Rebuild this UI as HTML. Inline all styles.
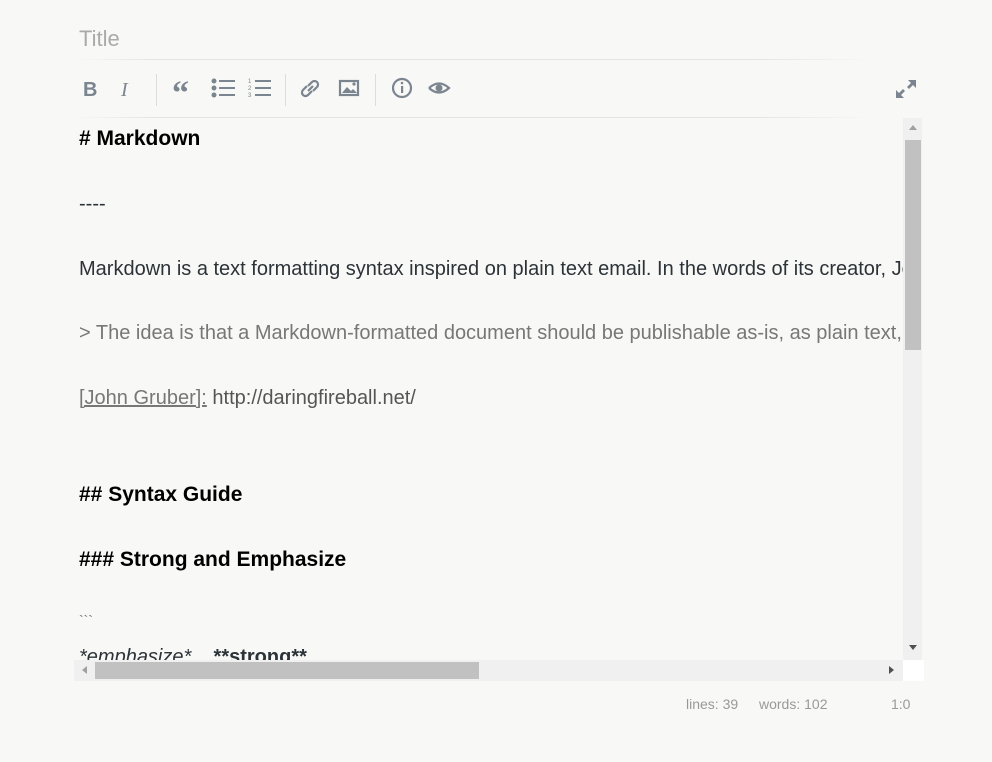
<!DOCTYPE html>
<html><head><style>
body{margin:0;background:#f8f8f6;width:992px;height:762px;overflow:hidden;font-family:"Liberation Sans","DejaVu Sans",sans-serif;position:relative}
.title{position:absolute;left:79px;top:26px;font-size:22px;color:#aaa}
.hl{position:absolute;left:74px;width:800px;height:1px;background:linear-gradient(90deg,#f8f8f6,#e4e4e2 10%,#e4e4e2 85%,#f8f8f6)}
.tb{position:absolute;top:74px;height:30px}
.sep{position:absolute;top:74px;width:1px;height:32px;background:#ddd}
.ed{position:absolute;left:74px;top:118px;width:829px;height:542px;overflow:hidden}
.ln{position:absolute;left:5px;white-space:nowrap;font-size:20px;color:#2c3338;line-height:24px}
.b{font-weight:bold;color:#000;font-size:21px}
.g{color:#777}
.vs{position:absolute;left:903px;top:118px;width:19px;height:542px;background:#f0f0f0}
.hs{position:absolute;left:74px;top:660px;width:829px;height:21px;background:#f0f0f0}
.st{position:absolute;top:696px;font-size:14px;color:#999}
</style></head><body>
<div class="title">Title</div>
<div class="hl" style="top:59px"></div>
<div class="hl" style="top:117px"></div>
<svg class="tb" style="left:74px" width="400" height="30" viewBox="0 0 400 30" fill="#7a8590">
<text x="9" y="22" font-size="20" font-weight="bold" font-family="Liberation Sans">B</text>
<text x="47" y="22" font-size="20" font-style="italic" font-family="Liberation Serif">I</text>
<text x="98" y="30" font-size="34" font-weight="bold" font-family="Liberation Serif">“</text>
<circle cx="140" cy="7" r="2.5"/><circle cx="140" cy="14" r="2.5"/><circle cx="140" cy="21" r="2.5"/>
<rect x="145" y="6" width="16" height="2"/><rect x="145" y="13" width="16" height="2"/><rect x="145" y="20" width="16" height="2"/>
<text x="174" y="9" font-size="6">1</text><text x="174" y="16" font-size="6">2</text><text x="174" y="23" font-size="6">3</text>
<rect x="181" y="6" width="16" height="2"/><rect x="181" y="13" width="16" height="2"/><rect x="181" y="20" width="16" height="2"/>
<g fill="none" stroke="#7a8590" stroke-width="2.2"><path d="M233 12l-4 4a3.5 3.5 0 0 0 5 5l4-4M239 17l4-4a3.5 3.5 0 0 0-5-5l-4 4M234 17l5-5"/>
<rect x="266" y="7" width="18" height="14"/><circle cx="328" cy="14" r="9"/>
<path d="M355 14q10-9 20 0q-10 9-20 0"/></g>
<path d="M268 19l5-6 4 4 2-2 4 4z"/><circle cx="280" cy="10" r="1.6"/>
<rect x="327" y="12" width="2.2" height="7"/><circle cx="328" cy="9" r="1.3"/><circle cx="365" cy="14" r="3.5"/>
</svg>
<div class="sep" style="left:156px"></div><div class="sep" style="left:285px"></div><div class="sep" style="left:375px"></div>
<svg style="position:absolute;left:894px;top:78px" width="24" height="22" fill="#7a8590"><path d="M14 2h8v8l-3-3-4 4-2-2 4-4zM2 12l3 3 4-4 2 2-4 4 3 3H2z"/></svg>
<div class="ed">
<div class="ln b" style="top:9px"># Markdown</div>
<div class="ln" style="top:74px">----</div>
<div class="ln" style="top:139px">Markdown is a text formatting syntax inspired on plain text email. In the words of its creator, John Gruber:</div>
<div class="ln g" style="top:203px">&gt; The idea is that a Markdown-formatted document should be publishable as-is, as plain text, without looking</div>
<div class="ln" style="top:268px"><span class="g" style="text-decoration:underline">[John Gruber]:</span> <span style="color:#555">http://daringfireball.net/</span></div>
<div class="ln b" style="top:365px">## Syntax Guide</div>
<div class="ln b" style="top:430px">### Strong and Emphasize</div>
<div class="ln g" style="top:490px;font-size:14px">&#96;&#96;&#96;</div>
<div class="ln" style="top:527px"><i>*emphasize*</i> &nbsp;&nbsp; <b>**strong**</b></div>
</div>
<div class="vs"><div style="position:absolute;left:2px;top:22px;width:16px;height:210px;background:#c1c1c1"></div>
<div style="position:absolute;left:6px;top:7px;border:4px solid transparent;border-bottom:5px solid #a0a0a0;border-top:0"></div>
<div style="position:absolute;left:6px;top:527px;border:4px solid transparent;border-top:5px solid #505050;border-bottom:0"></div></div>
<div class="hs"><div style="position:absolute;left:21px;top:2px;width:384px;height:17px;background:#c1c1c1"></div>
<div style="position:absolute;left:8px;top:6px;border:4px solid transparent;border-right:5px solid #a0a0a0;border-left:0"></div>
<div style="position:absolute;left:815px;top:6px;border:4px solid transparent;border-left:5px solid #505050;border-right:0"></div></div>
<div style="position:absolute;left:903px;top:660px;width:21px;height:21px;background:#fff"></div>
<div class="st" style="left:686px">lines: 39</div>
<div class="st" style="left:759px">words: 102</div>
<div class="st" style="left:891px">1:0</div>
</body></html>
